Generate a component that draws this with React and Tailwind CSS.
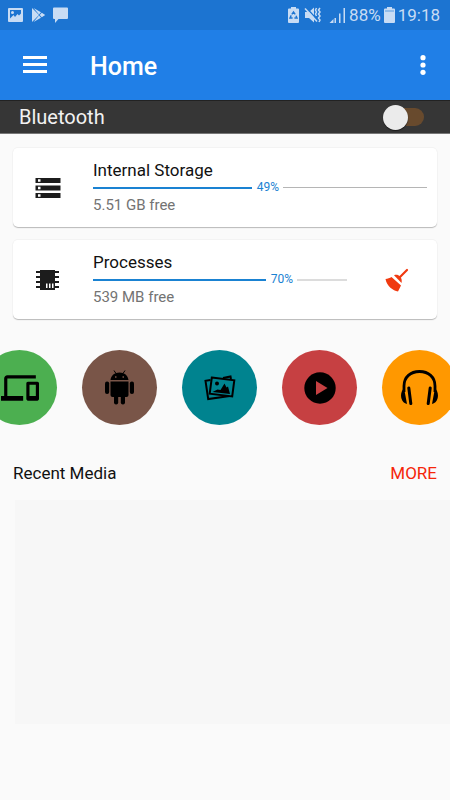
import React from "react";
import { MdDevices, MdStorage } from "react-icons/md";

function StatusBar() {
  return (
    <div className="flex h-[30px] items-center justify-between bg-[#1c74d1] pr-[10px] pl-2 text-[#c8dcf4]">
      <svg className="h-[30px] w-[64px]" viewBox="8 0 64 30" fill="currentColor" aria-hidden="true">
        <path
          fillRule="evenodd"
          d="M9 8h13a1 1 0 0 1 1 1v12a1 1 0 0 1-1 1H9a1 1 0 0 1-1-1V9a1 1 0 0 1 1-1zm1 2v8.500l3.500-3.500 1.500 2 2.500-3 1.500 1.500 2-2V10zm2.500 1a1.500 1.500 0 1 1 0 3 1.500 1.500 0 0 1 0-3z"
        />
        <path d="M32 8v14l7-7z" />
        <path d="M33.500 8l7.500 4.300-2 2.200zM33.500 22l7.500-4.300-2-2.200zM41.800 12.800l3.400 2.200-3.400 2.200L39.600 15z" />
        <path d="M54 7.500h13a1 1 0 0 1 1 1V18a1 1 0 0 1-1 1h-8.500L55 23v-4h-1a1 1 0 0 1-1-1V8.500a1 1 0 0 1 1-1z" />
      </svg>
      <div className="flex items-center gap-[3px] text-[17px] leading-[30px]">
        <svg className="h-[30px] w-[58px]" viewBox="287 0 58 30" fill="currentColor" aria-hidden="true">
          <path d="M290 7h5v1.500h2a1 1 0 0 1 1 1V22a1 1 0 0 1-1 1h-9a1 1 0 0 1-1-1V9.500a1 1 0 0 1 1-1h2z" />
          <path
            d="M290.800 14.300l1.700-2.300 1.700 2.300M295 15.700l1 2.300h-2.600M291.600 18H289l1.200-2.600"
            fill="none"
            stroke="#1c74d1"
            strokeWidth="1.400"
          />
          <path d="M304 12h4l5-4.500v15l-5-4.500h-4z" />
          <path d="M305 7.500l12 13" stroke="#1c74d1" strokeWidth="1.500" />
          <path d="M304 8.500l12 13" stroke="currentColor" strokeWidth="1.600" />
          <path
            d="M315.500 8l-1 2 1 2-1 2 1 2M319 8l-1.500 2 1.500 2-1.500 2 1.500 2-1.500 2 1.500 2-1 2"
            fill="none"
            stroke="currentColor"
            strokeWidth="1.500"
          />
          <path d="M328.500 23l4-4v4zM333.500 18h1.500v5h-1.500zM338 13.500h1.500V23H338zM342.500 8h1.500v15h-1.500z" />
        </svg>
        <span>88%</span>
        <svg className="h-[30px] w-[11px]" viewBox="0 0 11 30" fill="currentColor" aria-hidden="true">
          <path d="M3 7h5v1.500h2a1 1 0 0 1 1 1V22a1 1 0 0 1-1 1H1a1 1 0 0 1-1-1V9.500a1 1 0 0 1 1-1h2z" />
          <path d="M1 11h9" stroke="#5b9ce0" strokeWidth="1" />
        </svg>
        <span>19:18</span>
      </div>
    </div>
  );
}

function AppBar() {
  return (
    <header className="flex h-[70px] items-center bg-[#207fe7] pr-[18px] pl-[23px] text-white">
      <button type="button" aria-label="Open menu" className="flex h-10 w-6 flex-col justify-center gap-1 pb-px">
        <span className="h-[3px] w-6 bg-white" />
        <span className="h-[3px] w-6 bg-white" />
        <span className="h-[3px] w-6 bg-white" />
      </button>
      <h1 className="ml-[43px] flex-1 pt-1 text-[25px] leading-8 font-medium">Home</h1>
      <button type="button" aria-label="More options" className="flex h-10 w-[18px] items-center justify-center">
        <svg className="h-5 w-[6px]" viewBox="0 0 6 20" fill="currentColor">
          <circle cx="3" cy="2.700" r="2.600" />
          <circle cx="3" cy="10" r="2.600" />
          <circle cx="3" cy="17.300" r="2.600" />
        </svg>
      </button>
    </header>
  );
}

function BluetoothRow() {
  return (
    <label className="flex h-[34px] items-center justify-between border-t border-b border-t-[#222] border-b-[#777] bg-[#363636] pr-[26px] pl-[19px]">
      <span className="text-[20px] leading-8 text-[#f2f2f2]">Bluetooth</span>
      <input type="checkbox" role="switch" className="peer sr-only" />
      <span className="flex h-[18px] w-[41px] items-center rounded-full bg-[linear-gradient(to_right,transparent_14px,#684a2d_14px)] peer-checked:justify-end">
        <span className="size-[25px] shrink-0 rounded-full bg-[#ebebeb] shadow-[0_1px_1px_#1a1a1a]" />
      </span>
    </label>
  );
}

function Progress({ value, label, restClass }) {
  return (
    <div
      role="progressbar"
      aria-label={label}
      aria-valuenow={value}
      aria-valuemin={0}
      aria-valuemax={100}
      className="flex h-[11px] items-center text-[12px] leading-[11px] text-[#1a82d2]"
    >
      <div className="shrink-0 pr-[5px]" style={{ width: `${value}%` }}>
        <div className="h-[2px] bg-[#1a82d2]" />
      </div>
      <span>{value}%</span>
      <div className={`ml-1 flex-1 ${restClass}`} />
    </div>
  );
}

function UsageCard({ icon, title, value, detail, restClass, action }) {
  return (
    <section className="flex h-20 items-center rounded-[5px] border-t border-[#f3f3f3] bg-white pr-[10px] shadow-[0_1px_1px_#b9b9b9]">
      <div className="flex w-20 shrink-0 items-center pl-[20px]">{icon}</div>
      <div className="flex-1">
        <h2 className="text-[17px] leading-6 text-[#111]">{title}</h2>
        <Progress value={value} label={title} restClass={restClass} />
        <p className="text-[15px] leading-6 text-[#737373]">{detail}</p>
      </div>
      {action}
    </section>
  );
}

function ChipIcon() {
  return (
    <svg className="ml-[3px] h-5 w-[23px]" viewBox="0 0 23 20" fill="#1c1c1c" aria-hidden="true">
      <path d="M4 0h15v20H4z" />
      <path d="M0 1h4v2H0zM0 6h4v2H0zM0 11h4v2H0zM0 16h4v2H0zM19 1h4v2h-4zM19 6h4v2h-4zM19 11h4v2h-4zM19 16h4v2h-4z" />
      <path d="M10 13.500h1.500V18H10zM13 13.500h1.500V18H13zM16 13.500h1.500V18H16z" fill="#fff" />
    </svg>
  );
}

function BroomIcon() {
  return (
    <svg className="h-6 w-6" viewBox="0 0 24 24" aria-hidden="true">
      <path d="M22 2L15 9" stroke="#f03a10" strokeWidth="2.200" strokeLinecap="round" />
      <path d="M9 7.200c2.500-.8 4.500-.2 6 1.300s2.200 3.800 1.500 6.500z" fill="#f03a10" />
      <path d="M6.500 9l9.500 8.500-3 6C8 22.500 2 18.500.5 11c2.200-.2 4.200-.9 6-2z" fill="#f03a10" />
    </svg>
  );
}

function AndroidIcon() {
  return (
    <svg className="h-[35px] w-[29px]" viewBox="0 0 29 35" fill="#000" aria-hidden="true">
      <path d="M9 .5l2 3M20 .5l-2 3" stroke="#000" strokeWidth="1" />
      <path
        fillRule="evenodd"
        d="M5.500 10C6 5.500 9.500 2.500 14.500 2.500s8.500 3 9 7.500zM10 6.200v1.500h1.500V6.200zm7.500 0v1.500H19V6.200z"
      />
      <path d="M5.500 11.500h18v13.500a2 2 0 0 1-2 2h-14a2 2 0 0 1-2-2z" />
      <rect x="0" y="11.500" width="4.200" height="12.500" rx="2" />
      <rect x="24.800" y="11.500" width="4.200" height="12.500" rx="2" />
      <rect x="9" y="24" width="4.200" height="10.500" rx="2" />
      <rect x="15.800" y="24" width="4.200" height="10.500" rx="2" />
    </svg>
  );
}

function PhotosIcon() {
  return (
    <svg className="h-[26px] w-8" viewBox="0 0 32 26" aria-hidden="true">
      <path d="M6.500 5L1.500 5.800 4.200 24l23.300-3.200M19 3l7.500-1.500.5 2.500" fill="none" stroke="#000" strokeWidth="2" />
      <path d="M7.800 2.500l22.500 2.800L28.200 21.500 5.700 18.700z" fill="#00838f" stroke="#000" strokeWidth="2" />
      <circle cx="13" cy="8.500" r="2" fill="#000" />
      <path d="M8.500 17l5-2.500 3 .5 4-6.500 2 4 1.500-1 2 7.500z" fill="#000" />
    </svg>
  );
}

function PlayIcon() {
  return (
    <svg className="h-8 w-8" viewBox="0 0 32 32" aria-hidden="true">
      <circle cx="16" cy="16" r="15.700" fill="#000" />
      <path d="M12 9l11.500 7L12 23z" fill="#c64042" />
    </svg>
  );
}

function HeadphonesIcon() {
  return (
    <svg className="h-[35px] w-[37px]" viewBox="0 0 37 35" fill="none" stroke="#000" aria-hidden="true">
      <path d="M3 22V16C3 7 9.500 1.500 18.500 1.500S34 7 34 16v6" strokeWidth="2.800" />
      <path d="M3 18C.3 21-.7 25 .6 29c.8 2.500 2.700 4.500 5.400 5z" fill="#000" stroke="none" />
      <path d="M34 18c2.700 3 3.700 7 2.400 11-.8 2.500-2.700 4.500-5.400 5z" fill="#000" stroke="none" />
      <path d="M7.800 18l2 15.500M29.200 18l-2 15.500" strokeWidth="3" strokeLinecap="round" />
    </svg>
  );
}

const circle = "flex size-[75px] shrink-0 items-center justify-center rounded-full";

function Shortcuts() {
  return (
    <nav aria-label="Shortcuts" className="mt-[31px] overflow-hidden">
      <div className="-ml-[18px] flex gap-[25px]">
        <button type="button" aria-label="Devices" className={`${circle} bg-[#4caf50]`}>
          <MdDevices className="size-[38px] text-black" />
        </button>
        <button type="button" aria-label="Apps" className={`${circle} bg-[#795548]`}>
          <AndroidIcon />
        </button>
        <button type="button" aria-label="Images" className={`${circle} bg-[#00838f]`}>
          <PhotosIcon />
        </button>
        <button type="button" aria-label="Videos" className={`${circle} bg-[#c64042]`}>
          <PlayIcon />
        </button>
        <button type="button" aria-label="Audio" className={`${circle} bg-[#ff9800]`}>
          <HeadphonesIcon />
        </button>
      </div>
    </nav>
  );
}

export default function App() {
  return (
    <div className="min-h-screen overflow-x-hidden bg-[#fafafa] font-[Roboto,sans-serif]">
      <StatusBar />
      <AppBar />
      <BluetoothRow />
      <main>
        <div className="mt-[13px] flex flex-col gap-3 px-[13px]">
          <UsageCard
            icon={<MdStorage className="size-[30px] text-[#1c1c1c]" />}
            title="Internal Storage"
            value={49}
            detail="5.51 GB free"
            restClass="h-px bg-[#b5b5b5]"
          />
          <UsageCard
            icon={<ChipIcon />}
            title="Processes"
            value={70}
            detail="539 MB free"
            restClass="h-[2px] bg-[#dcdcdc]"
            action={
              <button type="button" aria-label="Clean up" className="flex w-20 justify-end pr-[18px]">
                <BroomIcon />
              </button>
            }
          />
        </div>
        <Shortcuts />
        <div className="mt-9 flex items-center justify-between px-[13px] text-[17px] leading-6">
          <h2 className="text-[#111]">Recent Media</h2>
          <a href="#media" className="text-[#f5260a]">
            MORE
          </a>
        </div>
        <div className="mt-[15px] ml-[15px] h-[224px] bg-[#f7f7f7]" />
      </main>
    </div>
  );
}
